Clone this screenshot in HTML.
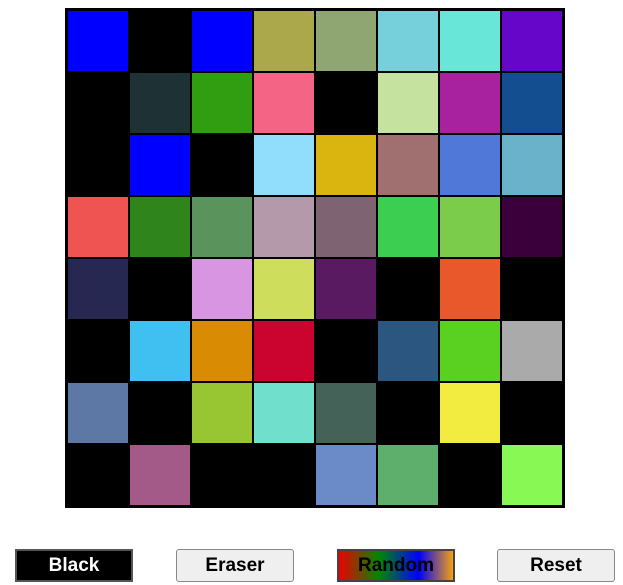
<!DOCTYPE html><html><head><style>
body{margin:0;width:623px;height:585px;background:#fff;position:relative;font-family:"Liberation Sans",sans-serif}
#g{position:absolute;left:65px;top:8px;width:496px;height:496px;border:2px solid #000;background:#000;display:grid;grid-template-columns:repeat(8,62px);grid-template-rows:repeat(8,62px)}
#g div{border:1px solid #000}
.b{position:absolute;top:549px;width:116px;height:31px;border:1px solid #888;border-radius:3px;background:#efefef;font-weight:bold;font-size:19px;text-align:center;line-height:31px;color:#000}
</style></head><body>
<div id="g"></div>
<div class="b" style="left:15px;background:#000;color:#fff;border:2px solid #555;width:114px;height:29px;border-radius:0;line-height:29px">Black</div>
<div class="b" style="left:176px">Eraser</div>
<div class="b" style="left:337px;background:linear-gradient(90deg,#e00,#080 35%,#00f 70%,#f4a010);border:2px solid #444;width:114px;height:29px;border-radius:0;line-height:29px">Random</div>
<div class="b" style="left:497px">Reset</div>
<script>
var c="00f 000 00f aaa84a 8fa572 75d0dc 68e6d8 6506c9 000 1e3236 319e12 f46484 000 c5e29e a8229f 134e90 000 00f 000 91ddfc dab510 a07070 5078d8 6ab2ca ef5452 30841c 5a945c b399aa 7e6372 3cce50 7ccc4c 3a003c 262852 000 d895e2 cede5c 5a1a62 000 e9582a 000 000 40c0f0 d98b04 ca042e 000 2a5680 5ad020 aaa 5e78a6 000 98c632 70dfcc 446258 000 f2ec40 000 000 a45a88 000 000 6a8ac8 5eae6c 000 88f854".split(" ");
var g=document.getElementById("g");c.forEach(function(x){var d=document.createElement("div");d.style.background="#"+x;g.appendChild(d)});
</script>
</body></html>
